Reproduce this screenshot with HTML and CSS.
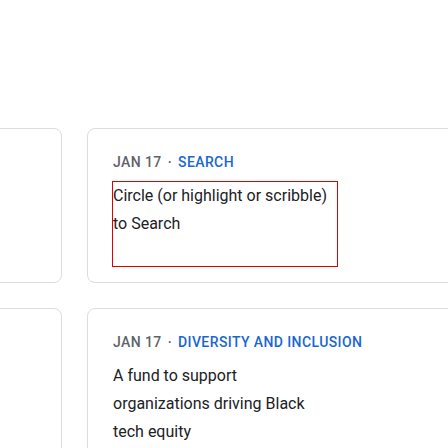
FILE: index.html
```html
<!DOCTYPE html>
<html>
<head>
<meta charset="utf-8">
<link rel="stylesheet" href="styles.css">
</head>
<body>
<div class="grid">
  <div class="card"></div>
  <div class="card">
    <div class="eyebrow"><span class="date">Jan 17</span><span class="sep">·</span><span class="cat">Search</span></div>
    <div class="title outlined">Circle (or highlight or scribble) to Search</div>
  </div>
  <div class="card"></div>
  <div class="card">
    <div class="eyebrow"><span class="date">Jan 17</span><span class="sep">·</span><span class="cat">Diversity and Inclusion</span></div>
    <div class="title">A fund to support organizations driving Black tech equity</div>
  </div>
</div>
</body>
</html>
```

FILE: styles.css
```css
html, body {
  margin: 0;
  padding: 0;
  background: #fff;
  overflow: hidden;
}
.grid {
  display: grid;
  grid-template-columns: 300px 420px;
  grid-auto-rows: 155px;
  gap: 25px;
  padding-top: 128px;
  margin-left: -238px;
  font-family: Roboto, "Open Sans", sans-serif;
}
.card {
  box-sizing: border-box;
  border: 1px solid #dadce0;
  border-radius: 8px;
  padding: 23px 24px 16px 25px;
}
.eyebrow {
  height: 20px;
  line-height: 20px;
  font-size: 14px;
  font-weight: 500;
  letter-spacing: 0.4px;
  text-transform: uppercase;
  color: #5f6368;
  white-space: nowrap;
}
.sep {
  margin: 0 6px;
}
.cat {
  color: #1967d2;
}
.title {
  margin-top: 10px;
  width: 224px;
  font-size: 16px;
  line-height: 28px;
  color: #202124;
}
.outlined {
  height: 84px;
  outline: 1px solid #e00000;
}
```
